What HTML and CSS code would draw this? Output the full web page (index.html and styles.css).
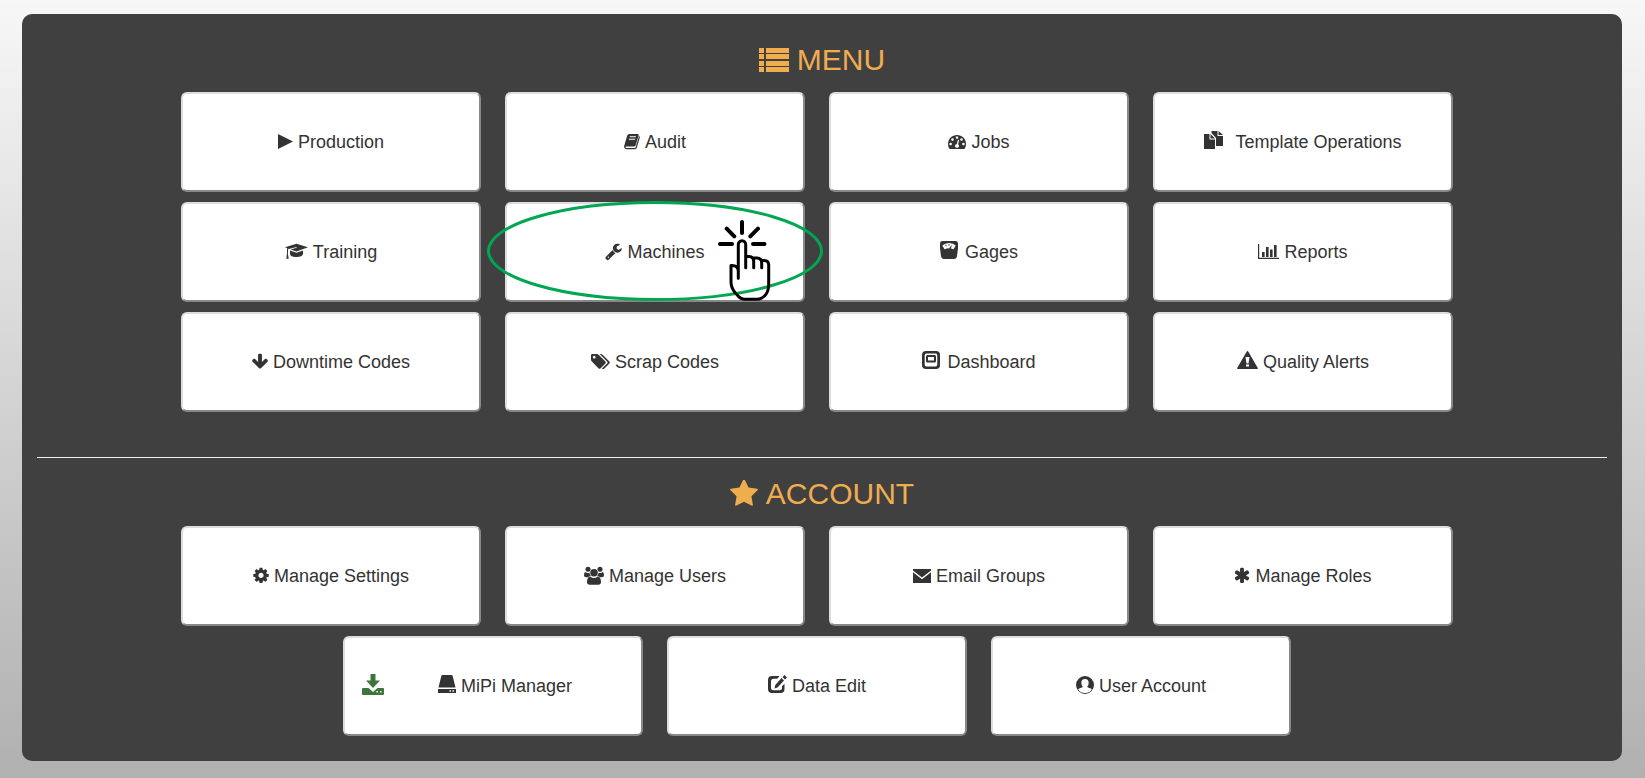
FILE: index.html
```html
<!DOCTYPE html>
<html lang="en">
<head>
<meta charset="utf-8">
<title>Menu</title>
<link rel="stylesheet" href="styles.css">
</head>
<body>
<main class="panel">
  <section>
    <h2 class="heading"><svg width="30" height="24" viewBox="0 0 30 24" aria-hidden="true"><path d="M0 0h5v5H0zM7 0h23v5H7zM0 6h5v5H0zM7 6h23v5H7zM0 13h5v5H0zM7 13h23v5H7zM0 19h5v5H0zM7 19h23v5H7z"/></svg>MENU</h2>
    <ul class="tiles">
      <li class="tile"><button type="button" class="btn"><svg width="15" height="22" viewBox="0 0 15 22" aria-hidden="true"><path d="M0 3l15 7.5L0 18z"/></svg>Production</button></li>
      <li class="tile"><button type="button" class="btn"><svg width="16" height="22" viewBox="0 0 16 22" aria-hidden="true"><path fill-rule="evenodd" d="M5.2 3h8.3q1.5 0 1.1 1.4l-2.900 9.800q-.4 1.300-1.700 1.300H2.200q-1 0-.6 1 .2.5 1 .5h7.900q1 0 1.300-1l2.900-9.900.1-1.200q1.400.4 1 1.700l-2.900 10q-.5 1.600-2 1.600H2.400Q.8 18.200.2 16.600-.1 15.600.3 14.400L3.200 4.600Q3.700 3 5.200 3zM5.800 5.300l-.3 1h6.200l.3-1zM5.100 7.700l-.3 1H11l.3-1z"/></svg>Audit</button></li>
      <li class="tile"><button type="button" class="btn"><svg width="18" height="22" viewBox="0 0 18 22" aria-hidden="true"><path transform="translate(0 1.400) scale(.01005)" d="M384 1152q0-53-37.500-90.500t-90.500-37.500-90.500 37.500-37.500 90.500 37.500 90.500 90.500 37.500 90.500-37.500 37.500-90.500zm192-448q0-53-37.500-90.500t-90.500-37.500-90.500 37.500-37.500 90.500 37.500 90.500 90.500 37.500 90.500-37.500 37.500-90.500zm428 481l101-382q6-26-7.500-48.500t-38.500-29.500-48 6.500-30 39.500l-101 382q-60 5-107 43.500t-63 98.500q-20 77 20 146t117 89 146-20 89-117q16-60-6-117t-72-91zm660-33q0-53-37.500-90.500t-90.500-37.500-90.500 37.500-37.500 90.500 37.500 90.500 90.500 37.500 90.500-37.500 37.500-90.500zm-640-640q0-53-37.500-90.500t-90.500-37.500-90.500 37.500-37.500 90.500 37.500 90.500 90.500 37.500 90.500-37.500 37.500-90.500zm448 192q0-53-37.500-90.500t-90.500-37.500-90.500 37.500-37.500 90.500 37.500 90.500 90.500 37.500 90.500-37.500 37.500-90.500zm320 448q0 261-141 483-19 29-54 29h-1402q-35 0-54-29-141-221-141-483 0-182 71-348t191-286 286-191 348-71 348 71 286 191 191 286 71 348z"/></svg>Jobs</button></li>
      <li class="tile"><button type="button" class="btn btn-wide-gap"><svg width="19" height="22" viewBox="0 0 19 22" aria-hidden="true"><path d="M0 3h5.500v5.500H11V18H0zM6.500 3L11 7.500H6.500zM7.500 0h6v5H19v10h-7V7L7.500 2zM14.500 0L19 4h-4.500z"/></svg>Template Operations</button></li>
      <li class="tile"><button type="button" class="btn"><svg width="23" height="22" viewBox="0 0 23 22" aria-hidden="true"><path d="M11.500 2.700L23 6.300l-11.500 4.200L5.700 8.500l5.900-1.800v-.6L4 7.900 0 6.300zM5 9.400l6.500 2.300L18 9.400v3.400q-.3 3-6.500 3.200T5 12.800zM2 7.500h1.200l-.3 5 .8 5.200H1.300L2 12.500z"/></svg>Training</button></li>
      <li class="tile"><button type="button" class="btn"><svg width="17" height="22" viewBox="0 0 17 22" aria-hidden="true"><path transform="translate(-.5 1.400) scale(.01005)" d="M448 1472q0-26-19-45t-45-19-45 19-19 45 19 45 45 19 45-19 19-45zm644-420l-682 682q-37 37-90 37-52 0-91-37l-106-108q-38-36-38-90 0-53 38-91l681-681q39 98 114.500 173.500t173.500 114.500zm634-435q0 39-23 106-47 134-164.500 217.500t-258.500 83.500q-185 0-316.500-131.500t-131.500-316.500 131.500-316.500 316.500-131.500q58 0 121.500 16.500t107.500 46.500q16 11 16 28t-16 28l-293 169v224l193 107q5-3 79-48.500t135.500-81 70.500-35.500q15 0 23.500 10t8.500 25z"/></svg>Machines</button>
        <svg class="callout" viewBox="0 0 336 102" aria-hidden="true"><ellipse class="callout-ring" cx="168" cy="50" rx="166.500" ry="48.500"/><path class="callout-rays" d="M255 21v11M239.700 27.700l7.600 7.600M271 27.700l-7.700 7.600M233 43h12M266 43h11.500"/><path class="callout-hand" d="M251.300 77.300V43.500a3.700 3.700 0 0 1 7.400 0v23.200M258.700 55.500h3.300q4.700 0 4.700 5v6.200M266.700 57h3.300q4.700 0 4.700 5v4.700M274.700 59.500h2.500q4.500 0 4.500 4.500v20q-.5 10-7 13-2 1.300-5 1.300h-12q-4 0-7.500-4.300-6.200-6-6.200-13V64.500q7.300-.5 7.300 6"/></svg></li>
      <li class="tile"><button type="button" class="btn btn-mid-gap"><svg width="18" height="22" viewBox="0 0 18 22" aria-hidden="true"><path fill-rule="evenodd" d="M2 0h14q2 0 2 2.500v5L17 15q-.5 3-3 3H4q-2.500 0-3-3L0 7.500v-5Q0 0 2 0zM2.300 4.500l2.200 3.700q4.500-1.700 9 0l2.200-3.700Q13 2 9 2T2.300 4.500z"/><path d="M9 7.500L12 3.500l-1.200 4.200zM5.500 3.800h1v1.400h-1zM8.500 3h1v1.400h-1z"/></svg>Gages</button></li>
      <li class="tile"><button type="button" class="btn"><svg width="21" height="22" viewBox="0 0 21 22" aria-hidden="true"><path d="M0 3h1.200v13.800H21V18H0zM4 11h2.600v5H4zM8 6h2.600v10H8zM12 8.500h2.600V16H12zM16 4h2.600v12H16z"/></svg>Reports</button></li>
      <li class="tile"><button type="button" class="btn"><svg width="16" height="22" viewBox="0 0 16 22" aria-hidden="true"><path transform="translate(-1 1.400) scale(.01005)" d="M1675 832q0 53-37 90l-651 652q-39 37-91 37-53 0-90-37l-651-652q-38-36-38-90 0-53 38-91l74-75q39-37 91-37 53 0 90 37l294 294v-704q0-52 38-90t90-38h128q52 0 90 38t38 90v704l294-294q37-37 90-37 52 0 91 37l75 75q37 39 37 91z"/></svg>Downtime Codes</button></li>
      <li class="tile"><button type="button" class="btn"><svg width="19" height="22" viewBox="0 0 19 22" aria-hidden="true"><path fill-rule="evenodd" d="M1.300 3h4.400q1 0 1.900.8l6.800 6.800q.8.900 0 1.800l-5 5q-.9.800-1.800 0L.9 10.600Q0 9.700 0 8.700V4.300Q0 3 1.300 3zM3.200 4.800a1.400 1.400 0 1 0 .01 0z"/><path d="M8.500 3h1.200q1 0 1.900.8l6.800 6.800q.8.900 0 1.800l-5 5q-1.300 1.200-2.400 0l5.300-5.100q.7-.8 0-1.600L9.700 4Q9.200 3.400 8.500 3z"/></svg>Scrap Codes</button></li>
      <li class="tile"><button type="button" class="btn btn-mid-gap"><svg width="18" height="22" viewBox="0 0 18 22" aria-hidden="true"><path fill-rule="evenodd" d="M4 0h10q4 0 4 4v10q0 4-4 4H4q-4 0-4-4V4q0-4 4-4zM4.500 2.500q-1.800 0-1.800 1.800v9.400q0 1.800 1.800 1.800h9q1.800 0 1.800-1.800V4.300q0-1.800-1.800-1.800zM5.500 4h7q1.500 0 1.500 1.500v4.500q0 1.500-1.500 1.500h-7Q4 11.500 4 10V5.500Q4 4 5.500 4zM6 6v3.500h6V6z"/></svg>Dashboard</button></li>
      <li class="tile"><button type="button" class="btn"><svg width="21" height="22" viewBox="0 0 21 22" aria-hidden="true"><path fill-rule="evenodd" d="M10.500 0q.5 0 .9.700L20.800 17q.5 1-.6 1H.8q-1.100 0-.6-1L9.600.7Q10 0 10.500 0zM8.500 6l1 6.500h2l1-6.500zM9 13.500v2h3v-2z"/></svg>Quality Alerts</button></li>
    </ul>
  </section>
  <hr class="divider">
  <section>
    <h2 class="heading"><svg width="28" height="28" viewBox="0 0 28 28" aria-hidden="true"><path transform="translate(-1 -1.300) scale(.01674)" d="M1728 647q0 22-26 48l-363 354 86 500q1 7 1 20 0 21-10.500 35.500t-30.500 14.500q-19 0-40-12l-449-236-449 236q-22 12-40 12-21 0-31.500-14.500t-10.500-35.500q0-6 2-20l86-500-364-354q-25-27-25-48 0-37 56-46l502-73 225-455q19-41 49-41t49 41l225 455 502 73q56 9 56 46z"/></svg>ACCOUNT</h2>
    <ul class="tiles">
      <li class="tile"><button type="button" class="btn"><svg width="16" height="22" viewBox="0 0 16 22" aria-hidden="true"><path transform="translate(-1 1.400) scale(.01005)" d="M1152 896q0-106-75-181t-181-75-181 75-75 181 75 181 181 75 181-75 75-181zm512-109v222q0 12-8 23t-20 13l-185 28q-19 54-39 91 35 50 107 138 10 12 10 25t-9 23q-27 37-99 108t-94 71q-12 0-26-9l-138-108q-44 23-91 38-16 136-29 186-7 28-36 28h-222q-14 0-24.500-8.500t-11.500-21.500l-28-184q-49-16-90-37l-141 107q-10 9-25 9-14 0-25-11-126-114-165-168-7-10-7-23 0-12 8-23 15-21 51-66.500t54-70.500q-27-50-41-99l-183-27q-13-2-21-12.500t-8-23.500v-222q0-12 8-23t19-13l186-28q14-46 39-92-40-57-107-138-10-12-10-24 0-10 9-23 26-36 98.500-107.500t94.500-71.500q13 0 26 10l138 107q44-23 91-38 16-136 29-186 7-28 36-28h222q14 0 24.500 8.500t11.500 21.500l28 184q49 16 90 37l142-107q9-9 24-9 13 0 25 10 129 119 165 170 7 8 7 22 0 12-8 23-15 21-51 66.500t-54 70.500q26 50 41 98l183 28q13 2 21 12.500t8 23.500z"/></svg>Manage Settings</button></li>
      <li class="tile"><button type="button" class="btn"><svg width="20" height="22" viewBox="0 0 20 22" aria-hidden="true"><circle cx="10" cy="7.700" r="3.800"/><circle cx="4" cy="4.200" r="2.500"/><circle cx="16" cy="4.200" r="2.500"/><path d="M6.300 11.500Q8 13 10 13t3.700-1.500Q17 12 17 17q0 2.700-2.700 2.700H5.700Q3 19.700 3 17q0-5 3.300-5.500zM1 7q1.500 1 3 1 .8 0 1.400-.2.200 2 1.400 3.300-1.600 0-2.700 1.200H2Q0 12.300 0 10.500 0 7.500 1 7zM19 7q-1.500 1-3 1-.8 0-1.400-.2-.2 2-1.400 3.300 1.600 0 2.700 1.200H18q2 0 2-1.800 0-3-1-3.500z"/></svg>Manage Users</button></li>
      <li class="tile"><button type="button" class="btn"><svg width="18" height="22" viewBox="0 0 18 22" aria-hidden="true"><path d="M0 4h18v1.500l-9 7-9-7zM0 7.200l9 7 9-7V18H0z"/></svg>Email Groups</button></li>
      <li class="tile"><button type="button" class="btn"><svg width="16" height="22" viewBox="0 0 16 22" aria-hidden="true"><path transform="translate(-1 1.400) scale(.01005)" d="M1546 1050q46 26 59.500 77.500t-12.500 97.500l-64 110q-26 46-77.500 59.500t-97.500-12.500l-266-153v307q0 52-38 90t-90 38h-128q-52 0-90-38t-38-90v-307l-266 153q-46 26-97.500 12.500t-77.500-59.500l-64-110q-26-46-12.500-97.500t59.500-77.500l266-154-266-154q-46-26-59.500-77.500t12.500-97.500l64-110q26-46 77.500-59.500t97.500 12.500l266 153v-307q0-52 38-90t90-38h128q52 0 90 38t38 90v307l266-153q46-26 97.500-12.500t77.500 59.500l64 110q26 46 12.500 97.500t-59.500 77.500l-266 154z"/></svg>Manage Roles</button></li>
      <li class="tile"><button type="button" class="btn btn-download"><svg class="download" width="22" height="24" viewBox="0 0 22 24" aria-hidden="true"><path fill-rule="evenodd" d="M8.500 0h5v6.500H18L11 14 4 6.500h4.500zM1 14h5.500L11 18l4.500-4H21q1 0 1 1v5q0 1-1 1H1q-1 0-1-1v-5q0-1 1-1zM14.500 17v1.500H16V17zM18 17v1.500h1.500V17z"/></svg><svg width="18" height="22" viewBox="0 0 18 22" aria-hidden="true"><path fill-rule="evenodd" d="M4.500 0h9q1 0 1.200 1L17.500 12.500H.5L3.300 1Q3.500 0 4.500 0zM0 14h18v4H0zM11.500 15.300v1.400H13v-1.400zM14.500 15.300v1.400H16v-1.400z"/></svg>MiPi Manager</button></li>
      <li class="tile"><button type="button" class="btn"><svg width="19" height="22" viewBox="0 0 19 22" aria-hidden="true"><path d="M4 1h7.500L9.200 3.700H5.500q-2.500 0-2.500 2.500v6.600q0 2.500 2.500 2.500h6q2.500 0 2.500-2.500v-1.500l2.500-2.500V14q0 4-4 4H4q-4 0-4-4V5q0-4 4-4zM13.500 3l2.500 2.500-6.500 7-3 1 .8-3.500zM14.500 2L16.500 0l2.500 2.500-2 2z"/></svg>Data Edit</button></li>
      <li class="tile"><button type="button" class="btn"><svg width="18" height="22" viewBox="0 0 18 22" aria-hidden="true"><path fill-rule="evenodd" d="M9 1a9 9 0 1 1 0 18A9 9 0 1 1 9 1zM9 4q-3.700 0-3.700 4 0 2.300 1.500 3.700-.6.900-2.300 1.200-1.600.4-2.300 1.500A8 8 0 0 0 9 17.900a8 8 0 0 0 6.800-3.500q-.7-1.100-2.300-1.500-1.700-.3-2.300-1.200 1.500-1.400 1.500-3.700 0-4-3.700-4z"/></svg>User Account</button></li>
    </ul>
  </section>
</main>
</body>
</html>
```
FILE: styles.css
```css
* {
  box-sizing: border-box;
}

body {
  margin: 0;
  min-height: 100vh;
  padding: 14px 23px 17px 22px;
  background: linear-gradient(180deg, #f7f7f7, #b0b0b0);
  font-family: "Liberation Sans", Arial, sans-serif;
  color: #333;
}

svg {
  flex: none;
  fill: currentColor;
}

.panel {
  padding: 30px 15px 25px;
  border-radius: 10px;
  background: #404040;
}

.heading {
  display: flex;
  align-items: center;
  justify-content: center;
  gap: 8px;
  height: 31px;
  margin: 0 0 17px;
  color: #f0ad4e;
  font-size: 30px;
  font-weight: 400;
  line-height: 31px;
}

.tiles {
  display: flex;
  flex-wrap: wrap;
  justify-content: center;
  gap: 10px 24px;
  margin: 0;
  padding: 0 10px 0 0;
  list-style: none;
}

.tile {
  position: relative;
}

.btn {
  display: flex;
  align-items: center;
  justify-content: center;
  gap: 5px;
  width: 300px;
  height: 100px;
  padding: 0;
  border: 2px solid;
  border-color: #ddd #888 #888 #ddd;
  border-radius: 6px;
  background: #fff;
  color: #333;
  font-family: inherit;
  font-size: 18px;
  line-height: 24px;
  cursor: pointer;
}

.btn-mid-gap {
  gap: 7px;
}

.btn-wide-gap {
  gap: 12px;
}

.btn-download {
  padding-right: 52px;
}

.download {
  margin-right: 49px;
  color: #3c763d;
}

.callout {
  position: absolute;
  top: -1px;
  left: -18px;
  z-index: 1;
  width: 336px;
  height: 102px;
  pointer-events: none;
  fill: none;
  stroke-linecap: round;
  stroke-linejoin: round;
}

.callout-ring {
  stroke: #00a651;
  stroke-width: 3px;
}

.callout-rays {
  stroke: #000;
  stroke-width: 4px;
}

.callout-hand {
  stroke: #000;
  stroke-width: 3px;
}

.divider {
  height: 1px;
  margin: 45px 0 20px;
  border: 0;
  background: #eee;
}
```
